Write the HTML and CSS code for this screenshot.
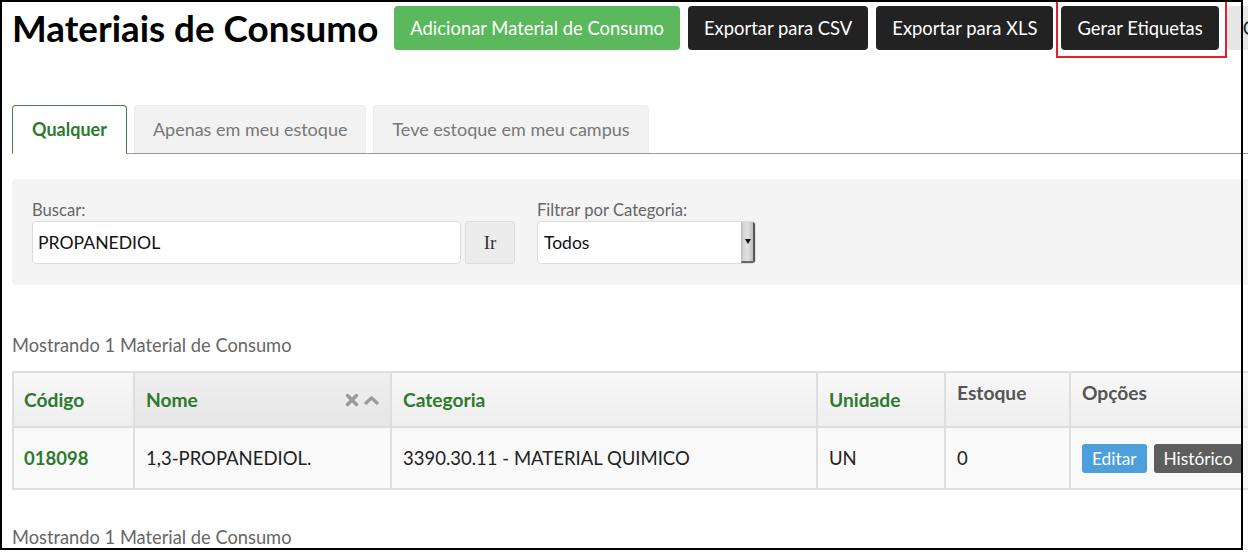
FILE: index.html
```html
<!DOCTYPE html>
<html lang="pt-BR">
<head>
<meta charset="utf-8">
<title>Materiais de Consumo</title>
<link rel="stylesheet" href="styles.css">
</head>
<body>
<div class="page">
  <header class="topbar">
    <h1 class="title">Materiais de Consumo</h1>
    <div class="actions">
      <a class="btn btn-lg btn-success">Adicionar Material de Consumo</a>
      <a class="btn btn-lg btn-dark">Exportar para CSV</a>
      <a class="btn btn-lg btn-dark">Exportar para XLS</a>
      <a class="btn btn-lg btn-dark">Gerar Etiquetas</a>
      <a class="btn btn-lg btn-light">Categorias</a>
    </div>
  </header>

  <ul class="tabs">
    <li class="tab active">Qualquer</li>
    <li class="tab">Apenas em meu estoque</li>
    <li class="tab">Teve estoque em meu campus</li>
  </ul>

  <form class="filters">
    <div class="field">
      <label class="field-label">Buscar:</label>
      <div class="input-group">
        <div class="input">PROPANEDIOL</div>
        <button type="button" class="btn-go">Ir</button>
      </div>
    </div>
    <div class="field">
      <label class="field-label">Filtrar por Categoria:</label>
      <div class="select">
        <span class="select-value">Todos</span>
        <span class="select-arrow"><svg width="6" height="5" viewBox="0 0 6 5"><path d="M0 0H6L3 5Z" fill="#111"/></svg></span>
      </div>
    </div>
  </form>

  <p class="count">Mostrando 1 Material de Consumo</p>

  <table class="grid">
    <colgroup>
      <col class="c-cod"><col class="c-nome"><col class="c-cat"><col class="c-un"><col class="c-est"><col class="c-opt">
    </colgroup>
    <thead>
      <tr>
        <th class="sortable first">Código</th>
        <th class="sortable sorted">
          <div class="th-inner">
            <span>Nome</span>
            <span class="sort-icons">
              <svg width="14" height="14" viewBox="0 0 14 14"><path d="M2.5 2.5L11.5 11.5M11.5 2.5L2.5 11.5" stroke="#9a9a9a" stroke-width="3.4" stroke-linecap="round"/></svg>
              <svg width="15" height="10" viewBox="0 0 15 10"><path d="M2 8L7.5 2.8L13 8" stroke="#9a9a9a" stroke-width="3.2" fill="none" stroke-linecap="round" stroke-linejoin="round"/></svg>
            </span>
          </div>
        </th>
        <th class="sortable">Categoria</th>
        <th class="sortable">Unidade</th>
        <th class="plain"><span class="th-top">Estoque</span></th>
        <th class="plain"><span class="th-top">Opções</span></th>
      </tr>
    </thead>
    <tbody>
      <tr>
        <td class="first"><a class="code">018098</a></td>
        <td>1,3-PROPANEDIOL.</td>
        <td>3390.30.11 - MATERIAL QUIMICO</td>
        <td>UN</td>
        <td>0</td>
        <td class="opts"><a class="btn btn-sm btn-info">Editar</a><a class="btn btn-sm btn-gray">Histórico</a></td>
      </tr>
    </tbody>
  </table>

  <p class="count count-bottom">Mostrando 1 Material de Consumo</p>
</div>
<div class="callout"></div>
<div class="frame"></div>
</body>
</html>
```

FILE: styles.css
```css
html, body {
  margin: 0;
  padding: 0;
  overflow: hidden;
  background: #fff;
}
body {
  font-family: Lato, "Open Sans", "Liberation Sans", sans-serif;
  color: #222;
  width: 1248px;
  height: 555px;
  position: relative;
}
.page {
  width: 1256px;
  padding: 6px 0 0 12px;
}
.topbar {
  display: flex;
  align-items: center;
  gap: 16px;
  white-space: nowrap;
}
.title {
  margin: 0;
  font-size: 36.8px;
  font-weight: 700;
  line-height: 44px;
  color: #000;
}
.actions {
  display: flex;
  gap: 8px;
}
.btn {
  display: inline-block;
  border-radius: 4px;
  text-decoration: none;
  white-space: nowrap;
}
.btn-lg {
  font-size: 18.4px;
  line-height: 24px;
  padding: 10px 16px;
}
.btn-success { background: #5cb85c; color: #fff; }
.btn-dark { background: #222; color: #fff; }
.btn-light { background: #e6e6e6; color: #222; }

.tabs {
  list-style: none;
  margin: 55px 0 0;
  padding: 0;
  display: flex;
  gap: 7px;
  border-bottom: 1px solid #9a9a9a;
  height: 48px;
  align-items: flex-end;
}
.tab {
  font-size: 18px;
  line-height: 24px;
  padding: 11px 18px 12px;
  color: #777;
  background: #f2f2f2;
  border: 1px solid #ececec;
  border-bottom: 0;
  border-radius: 4px 4px 0 0;
}
.tab.active {
  padding-left: 19px;
  padding-right: 19px;
  color: #2b7a2e;
  font-weight: 700;
  background: #fff;
  border: 1px solid #3f7f42;
  border-bottom: 1px solid #fff;
  margin-bottom: -1px;
}

.filters {
  margin: 25px 0 0;
  background: #f4f4f4;
  border-radius: 4px;
  padding: 21px 20px 21px;
  display: flex;
  gap: 22px;
}
.field-label {
  display: block;
  font-size: 16.6px;
  line-height: 20px;
  color: #666;
  margin-bottom: 1px;
}
.input-group {
  display: flex;
  gap: 4px;
}
.input {
  width: 429px;
  height: 43px;
  box-sizing: border-box;
  background: #fff;
  border: 1px solid #dcdcdc;
  border-radius: 4px;
  font-size: 17.6px;
  line-height: 41px;
  padding: 0 5px;
  color: #111;
}
.btn-go {
  width: 50px;
  height: 43px;
  background: #ececec;
  border: 1px solid #dcdcdc;
  border-radius: 3px;
  font-family: "Liberation Serif", "DejaVu Serif", serif;
  font-size: 19px;
  color: #333;
  padding: 0;
}
.select {
  width: 219px;
  height: 43px;
  box-sizing: border-box;
  background: #fff;
  border: 1px solid #dcdcdc;
  border-radius: 4px;
  display: flex;
  align-items: stretch;
  overflow: hidden;
}
.select-value {
  flex: 1;
  font-size: 17.5px;
  line-height: 41px;
  padding-left: 6px;
  color: #111;
}
.select-arrow {
  width: 11px;
  display: flex;
  align-items: center;
  justify-content: center;
  background: linear-gradient(to right, #cfcfcf, #e2e2e2 50%, #bdbdbd);
  border-left: 1px solid #bbb;
  border-right: 2px solid #555;
  border-bottom: 2px solid #666;
}

.count {
  margin: 48px 0 0;
  font-size: 18.3px;
  line-height: 24px;
  color: #666;
}
.count-bottom {
  margin-top: 35px;
}

.grid {
  margin-top: 14px;
  width: 1256px;
  table-layout: fixed;
  border-collapse: collapse;
  font-size: 18.5px;
}
.c-cod { width: 121px; }
.c-nome { width: 257px; }
.c-cat { width: 426px; }
.c-un { width: 128px; }
.c-est { width: 125px; }
.grid th, .grid td {
  border: 2px solid #dedede;
  text-align: left;
  padding: 0 11px;
}
.grid th {
  height: 53px;
  background: linear-gradient(#f8f8f8, #eeeeee);
  font-weight: 700;
  font-size: 19.2px;
  line-height: 24px;
}
.grid th.sortable {
  color: #2b7a2e;
  vertical-align: middle;
}
.grid th.sorted {
  background: linear-gradient(#efefef, #e6e6e6);
}
.grid th.plain {
  color: #555;
  vertical-align: top;
}
.th-top {
  display: block;
  margin-top: 8px;
}
.grid .first { padding-left: 10px; }
.th-inner {
  display: flex;
  align-items: center;
  justify-content: space-between;
}
.sort-icons {
  display: flex;
  align-items: center;
  gap: 5px;
}
.grid td {
  height: 60px;
  background: #f9f9f9;
  vertical-align: middle;
  line-height: 24px;
  color: #222;
}
.code {
  color: #2b7a2e;
  font-weight: 700;
  text-decoration: none;
}
.opts {
  white-space: nowrap;
}
.btn-sm {
  font-size: 17.3px;
  line-height: 23px;
  padding: 3px 10px;
  border-radius: 3px;
  color: #fff;
}
.btn-info { background: #4c9fdb; }
.btn-gray { background: #5e5e5e; margin-left: 7px; }

.callout {
  position: absolute;
  left: 1056px;
  top: -2px;
  width: 171px;
  height: 60px;
  border: 2px solid #e3212b;
  box-sizing: border-box;
  pointer-events: none;
}
.frame {
  position: absolute;
  left: 0;
  top: 0;
  width: 1243px;
  height: 550px;
  border: 2px solid #000;
  box-sizing: border-box;
  pointer-events: none;
}
```
